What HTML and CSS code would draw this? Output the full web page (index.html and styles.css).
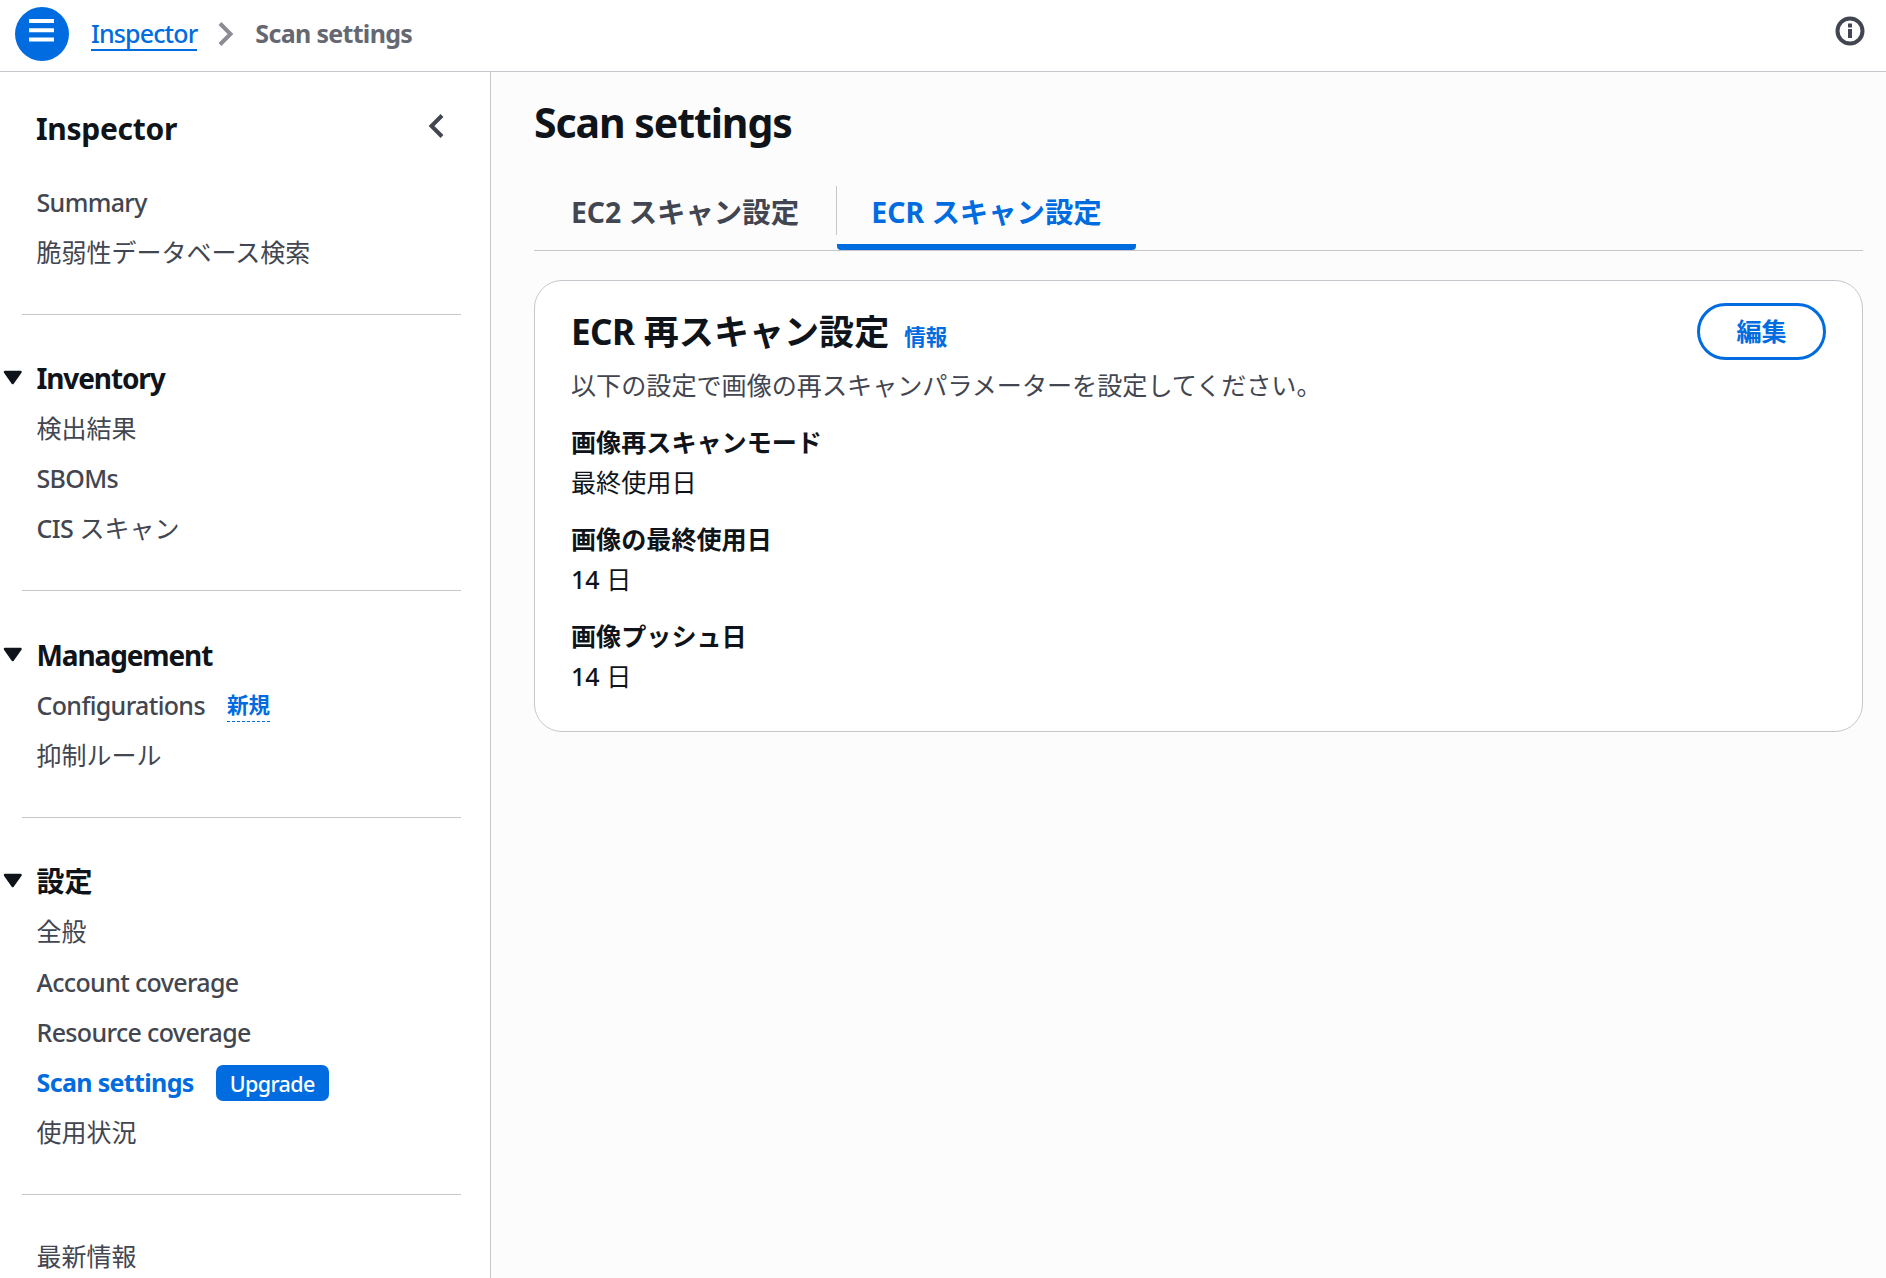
FILE: index.html
```
<!DOCTYPE html>
<html lang="ja">
<head>
<meta charset="UTF-8">
<meta name="viewport" content="width=device-width, initial-scale=1.0">
<title>Scan settings | Inspector</title>
<link rel="stylesheet" href="styles.css">
</head>
<body>

<header class="topbar">
  <button class="menu-button" aria-label="メニュー">
    <svg width="54" height="54" viewBox="0 0 54 54"><path d="M14 14h25M14 23.3h25M14 32.5h25" stroke="#fff" stroke-width="4"/></svg>
  </button>
  <nav class="breadcrumb">
    <a href="#" class="crumb-link">Inspector</a>
    <svg class="crumb-arrow" width="16" height="26" viewBox="0 0 16 26"><path d="M2 2.5L12.5 13L2 23.5" fill="none" stroke="#8c8c94" stroke-width="4"/></svg>
    <span class="crumb-current">Scan settings</span>
  </nav>
  <button class="info-button" aria-label="情報">
    <svg width="30" height="30" viewBox="0 0 30 30">
      <circle cx="15" cy="15" r="12.5" fill="none" stroke="#424650" stroke-width="4"/>
      <path d="M13 7.5h4v4h-4zM13 13h4v9h-4z" fill="#424650"/>
    </svg>
  </button>
</header>

<div class="layout">
  <!-- サイドナビゲーション -->
  <aside class="sidebar">
    <div class="sidebar-header">
      <h2>Inspector</h2>
      <svg width="16" height="26" viewBox="0 0 16 26"><path d="M14 2.5L3.5 13L14 23.5" fill="none" stroke="#424650" stroke-width="4"/></svg>
    </div>

    <ul class="nav-list">
      <li><a href="#" class="en">Summary</a></li>
      <li><a href="#">脆弱性データベース検索</a></li>
    </ul>
    <hr>

    <div class="nav-group">
      <h3><svg class="caret" width="20" height="16" viewBox="0 0 20 16"><path d="M2 2h15.500L9.700 13z"/></svg><span class="en">Inventory</span></h3>
      <ul class="nav-list">
        <li><a href="#">検出結果</a></li>
        <li><a href="#" class="en">SBOMs</a></li>
        <li><a href="#"><span class="en">CIS</span> スキャン</a></li>
      </ul>
    </div>
    <hr>

    <div class="nav-group management">
      <h3><svg class="caret" width="20" height="16" viewBox="0 0 20 16"><path d="M2 2h15.500L9.700 13z"/></svg><span class="en">Management</span></h3>
      <ul class="nav-list">
        <li><a href="#" class="en">Configurations</a><span class="new-label">新規</span></li>
        <li><a href="#">抑制ルール</a></li>
      </ul>
    </div>
    <hr>

    <div class="nav-group">
      <h3><svg class="caret" width="20" height="16" viewBox="0 0 20 16"><path d="M2 2h15.500L9.700 13z"/></svg>設定</h3>
      <ul class="nav-list">
        <li class="general"><a href="#">全般</a></li>
        <li><a href="#" class="en">Account coverage</a></li>
        <li><a href="#" class="en">Resource coverage</a></li>
        <li><a href="#" class="en active">Scan settings</a><span class="badge">Upgrade</span></li>
        <li><a href="#">使用状況</a></li>
      </ul>
    </div>
    <hr>

    <ul class="nav-list">
      <li><a href="#">最新情報</a></li>
    </ul>
  </aside>

  <main class="content">
    <h1>Scan settings</h1>

    <div class="tabs">
      <button class="tab">EC2 スキャン設定</button>
      <div class="tab-divider"></div>
      <button class="tab active">ECR スキャン設定</button>
    </div>

    <section class="card">
      <div class="card-header">
        <div class="card-title">
          <h2><span class="en">ECR</span> 再スキャン設定</h2>
          <a href="#" class="info-link">情報</a>
        </div>
        <button class="edit-button">編集</button>
      </div>
      <p class="description">以下の設定で画像の再スキャンパラメーターを設定してください。</p>
      <dl class="settings">
        <dt>画像再スキャンモード</dt>
        <dd>最終使用日</dd>
        <dt>画像の最終使用日</dt>
        <dd><span class="num">14</span> 日</dd>
        <dt>画像プッシュ日</dt>
        <dd><span class="num">14</span> 日</dd>
      </dl>
    </section>
  </main>
</div>

</body>
</html>
```
FILE: styles.css
```
* {
  box-sizing: border-box;
}
body {
  margin: 0;
  height: 100vh;
  overflow: hidden;
  display: flex;
  flex-direction: column;
  font-family: "Noto Sans", "Noto Sans CJK JP", sans-serif;
  font-size: 25px;
  color: #0f141a;
  background-color: #fff;
}
h1, h2, h3, p, ul, dl, dd {
  margin: 0;
  padding: 0;
}
a {
  color: inherit;
  text-decoration: none;
}
button {
  font: inherit;
  color: inherit;
  border: none;
  background: none;
  padding: 0;
  cursor: pointer;
}
svg {
  display: block;
  flex-shrink: 0;
}

/* ヘッダー */
.topbar {
  height: 72px;
  flex-shrink: 0;
  display: flex;
  align-items: flex-start;
  padding: 7px 21px 0 15px;
  border-bottom: 1px solid #c6c6cd;
}
.menu-button {
  width: 54px;
  height: 54px;
  border-radius: 50%;
  background-color: #006ce0;
}
.breadcrumb {
  display: flex;
  align-items: flex-start;
  margin-left: 22px;
  line-height: 34px;
}
.crumb-link {
  margin-top: 9px;
  height: 35px;
  font-weight: 500;
  color: #006ce0;
  letter-spacing: -0.035em;
  border-bottom: 2px solid #006ce0;
}
.crumb-arrow {
  margin: 14px 21px 0 21px;
}
.crumb-current {
  margin-top: 9px;
  font-weight: 700;
  color: #656871;
  letter-spacing: -0.027em;
}
.info-button {
  margin: 9px 0 0 auto;
}

.layout {
  flex: 1;
  min-height: 0;
  display: flex;
}

/* サイドバー */
.sidebar {
  width: 491px;
  flex-shrink: 0;
  overflow: hidden;
  border-right: 1px solid #c6c6cd;
}
.sidebar-header {
  display: flex;
  justify-content: space-between;
  height: 105px;
  padding: 41px 46px 0 36px;
}
.sidebar-header h2 {
  font-size: 30px;
  line-height: 32px;
  letter-spacing: -0.01em;
}
.nav-list {
  list-style: none;
  padding-left: 36.5px;
  color: #424650;
}
.nav-list li {
  display: flex;
  align-items: flex-start;
  height: 50px;
  line-height: 50px;
}
.nav-list li.general {
  height: 51px;
}
.nav-list .en {
  font-weight: 500;
  letter-spacing: -0.026em;
}
.nav-list .en.active {
  font-weight: 700;
  color: #006ce0;
}
.sidebar hr {
  height: 1px;
  margin: 37px 29px 37px 22px;
  border: none;
  background-color: #c6c6cd;
}
.sidebar hr:last-of-type {
  margin-bottom: 36px;
}
.nav-group.management {
  padding-top: 1px;
}
.nav-group h3 {
  display: flex;
  align-items: center;
  height: 51px;
  padding-left: 2.5px;
  font-size: 28px;
  line-height: 50px;
}
.nav-group h3 .en {
  letter-spacing: -0.04em;
}
.caret {
  margin-right: 14px;
  fill: #0f141a;
  stroke: #0f141a;
  stroke-width: 2.5;
  stroke-linejoin: round;
}
.new-label {
  margin: 9px 0 0 22px;
  font-size: 21.5px;
  font-weight: 700;
  line-height: 32px;
  color: #006ce0;
  border-bottom: 1px dashed #006ce0;
}
.badge {
  margin: 8px 0 0 22px;
  height: 36px;
  padding: 0 14px;
  border-radius: 7px;
  background-color: #006ce0;
  color: #fff;
  font-size: 21.5px;
  font-weight: 500;
  line-height: 37px;
  letter-spacing: -0.027em;
}

/* メイン */
.content {
  flex: 1;
  padding: 23px 23px 0 43px;
  background-color: #fcfcfd;
  font-size: 25.1px;
}
h1 {
  font-size: 41px;
  line-height: 54px;
  letter-spacing: -0.026em;
}
.tabs {
  display: flex;
  height: 102px;
  padding-top: 37px;
  border-bottom: 1px solid #c6c6cd;
}
.tab {
  width: 302px;
  height: 64px;
  padding-bottom: 16px;
  font-size: 28.4px;
  font-weight: 700;
  color: #424650;
}
.tab-divider {
  width: 1px;
  height: 49px;
  background-color: #c6c6cd;
}
.tab.active {
  width: 299px;
  padding-bottom: 10px;
  color: #006ce0;
  border-bottom: 6px solid #006ce0;
  border-radius: 4px;
}
.card {
  margin-top: 29px;
  height: 452px;
  padding: 22px 36px 0;
  background-color: #fff;
  border: 1px solid #c6c6cd;
  border-radius: 28px;
}
.card-header {
  display: flex;
  justify-content: space-between;
  height: 57px;
}
.card-title {
  display: flex;
  align-items: baseline;
  gap: 15px;
  line-height: 57px;
}
.card-title h2 {
  font-size: 35.1px;
}
.card-title .en {
  letter-spacing: -0.015em;
}
.info-link {
  font-size: 21.5px;
  font-weight: 700;
  color: #006ce0;
}
.edit-button {
  width: 129px;
  height: 57px;
  padding-bottom: 3px;
  border: 3px solid #006ce0;
  border-radius: 29px;
  font-weight: 700;
  color: #006ce0;
}
.description {
  margin-top: 7px;
  line-height: 36px;
  color: #424650;
}
.settings {
  margin-top: 19px;
  line-height: 40px;
}
.settings dt {
  font-weight: 700;
}
.settings dd {
  margin-bottom: 17px;
}
.num {
  font-weight: 500;
}
```
